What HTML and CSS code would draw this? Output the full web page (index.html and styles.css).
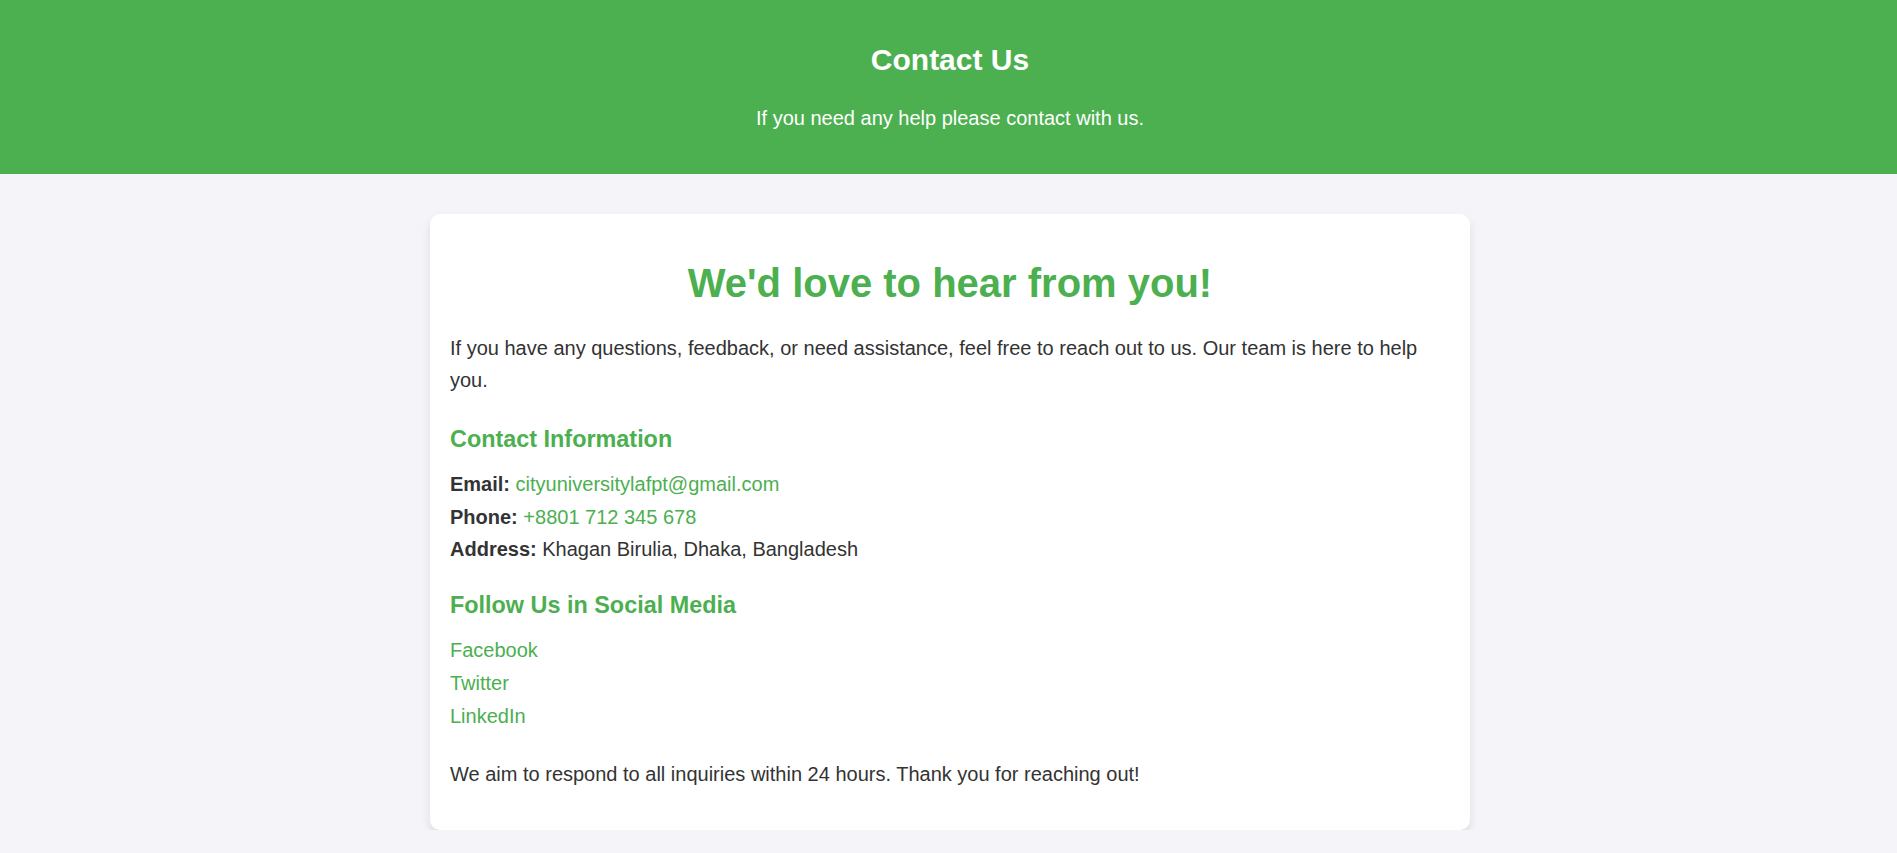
FILE: index.html
```html
<!DOCTYPE html>
<html lang="en">
<head>
<meta charset="UTF-8">
<title>Contact Us</title>
<link rel="stylesheet" href="styles.css">
</head>
<body>
<header class="site-header">
  <h1 class="site-title">Contact Us</h1>
  <p class="site-subtitle">If you need any help please contact with us.</p>
</header>
<div class="page">
  <main class="card">
    <h2 class="card-title">We'd love to hear from you!</h2>
    <p class="intro">If you have any questions, feedback, or need assistance, feel free to reach out to us. Our team is here to help you.</p>
    <h3 class="section-title">Contact Information</h3>
    <div class="info-list">
      <div class="info-line"><strong>Email:</strong> <a class="link" href="#">cityuniversitylafpt@gmail.com</a></div>
      <div class="info-line"><strong>Phone:</strong> <a class="link" href="#">+8801 712 345 678</a></div>
      <div class="info-line"><strong>Address:</strong> Khagan Birulia, Dhaka, Bangladesh</div>
    </div>
    <h3 class="section-title follow">Follow Us in Social Media</h3>
    <ul class="social-list">
      <li class="social-item"><a class="link" href="#">Facebook</a></li>
      <li class="social-item"><a class="link" href="#">Twitter</a></li>
      <li class="social-item"><a class="link" href="#">LinkedIn</a></li>
    </ul>
    <p class="outro">We aim to respond to all inquiries within 24 hours. Thank you for reaching out!</p>
  </main>
</div>
</body>
</html>
```
FILE: styles.css
```css
html, body {
  margin: 0;
  padding: 0;
}
body {
  font-family: "Liberation Sans", Arial, sans-serif;
  background: #f4f4f9;
  color: #333;
  line-height: 1.6;
  font-size: 20px;
}
.site-header {
  background: #4caf50;
  color: #fff;
  text-align: center;
  padding: 20px 20px 20px 23px;
  height: 174px;
  box-sizing: border-box;
}
.site-title {
  font-size: 30px;
  line-height: 48px;
  margin: 15.6px 0 18.5px;
  font-weight: bold;
}
.site-subtitle {
  margin: 0;
  font-size: 20px;
  line-height: 32px;
}
.page {
  padding-left: 3px;
}
.card {
  display: block;
  max-width: 1000px;
  margin: 40px auto 0;
  background: #fff;
  padding: 20px;
  border-radius: 10px;
  box-shadow: 0 5px 10px rgba(0, 0, 0, 0.1);
}
.card-title {
  color: #4caf50;
  text-align: center;
  font-size: 40px;
  line-height: 64px;
  margin: 17px 0 17px;
}
.intro {
  margin: 0;
}
.section-title {
  color: #4caf50;
  font-size: 23.4px;
  line-height: 37.4px;
  margin: 24.5px 0 10.3px;
}
.section-title.follow {
  margin-top: 21px;
  margin-bottom: 10px;
}
.info-line {
  line-height: 32.5px;
}
.link {
  color: #4caf50;
  text-decoration: none;
}
.social-list {
  list-style: none;
  margin: 0;
  padding: 0;
}
.social-item {
  line-height: 33px;
}
.outro {
  margin: 25px 0 20px;
}
```
